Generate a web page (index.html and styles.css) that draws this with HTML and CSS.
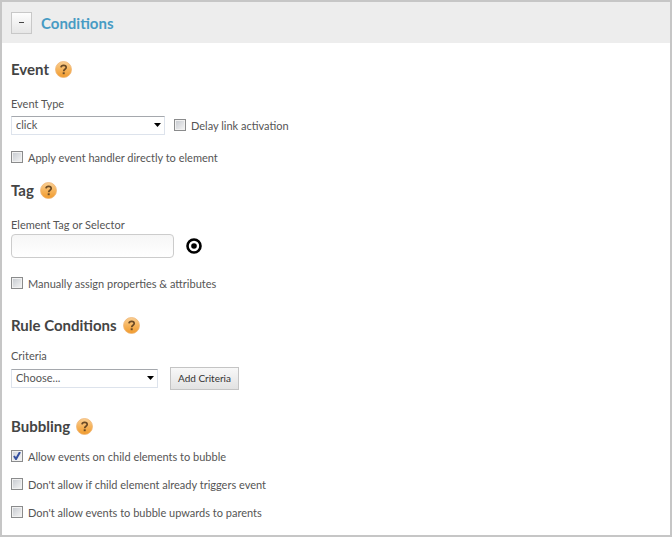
FILE: index.html
```html
<!DOCTYPE html>
<html lang="en">
<head>
<meta charset="utf-8">
<title>Conditions</title>
<link rel="stylesheet" href="styles.css">
</head>
<body>
<svg class="defs" width="0" height="0" aria-hidden="true">
  <defs>
    <linearGradient id="orange" x1="0" y1="0" x2="0" y2="1">
      <stop offset="0" stop-color="#f9cf94"/>
      <stop offset="0.5" stop-color="#f6b45c"/>
      <stop offset="1" stop-color="#f09a2c"/>
    </linearGradient>
    <symbol id="help" viewBox="0 0 17 17">
      <circle cx="8.5" cy="8.5" r="8" fill="url(#orange)" stroke="#f0b676" stroke-width="0.8"/>
      <path d="M6 6.3C6.2 4.9 7.3 4.3 8.6 4.3c1.500 0 2.600.8 2.600 2.100 0 1.900-2.500 1.900-2.500 3.900" fill="none" stroke="#6b4a25" stroke-width="1.700"/>
      <rect x="7.700" y="11.300" width="2" height="1.900" fill="#6b4a25"/>
    </symbol>
  </defs>
</svg>
<main class="panel">
  <header class="panel-header">
    <button class="toggle" type="button" aria-label="Collapse"><span class="minus"></span></button>
    <h1>Conditions</h1>
  </header>
  <form class="panel-body">
    <section class="event">
      <h2>Event <svg class="help"><use href="#help"/></svg></h2>
      <label class="caption" for="type">Event Type</label>
      <div class="row">
        <select id="type" class="wide"><option>click</option></select>
        <label class="check"><input type="checkbox"><span>Delay link activation</span></label>
      </div>
      <label class="check"><input type="checkbox"><span>Apply event handler directly to element</span></label>
    </section>
    <section class="tag">
      <h2>Tag <svg class="help"><use href="#help"/></svg></h2>
      <label class="caption" for="selector">Element Tag or Selector</label>
      <div class="row">
        <input id="selector" class="text" type="text">
        <button class="target" type="button" aria-label="Pick element">
          <svg width="16" height="16" viewBox="0 0 16 16"><circle cx="8" cy="8" r="6.500" fill="#fff" stroke="#000" stroke-width="2.600"/><circle cx="8" cy="8" r="2.800"/></svg>
        </button>
      </div>
      <label class="check"><input type="checkbox"><span>Manually assign properties &amp; attributes</span></label>
    </section>
    <section class="rules">
      <h2>Rule Conditions <svg class="help"><use href="#help"/></svg></h2>
      <label class="caption" for="criteria">Criteria</label>
      <div class="row">
        <select id="criteria"><option>Choose...</option></select>
        <button class="add" type="button">Add Criteria</button>
      </div>
    </section>
    <section class="bubbling">
      <h2>Bubbling <svg class="help"><use href="#help"/></svg></h2>
      <label class="check"><input type="checkbox" checked><span>Allow events on child elements to bubble</span></label>
      <label class="check"><input type="checkbox"><span>Don't allow if child element already triggers event</span></label>
      <label class="check"><input type="checkbox"><span>Don't allow events to bubble upwards to parents</span></label>
    </section>
  </form>
</main>
</body>
</html>
```
FILE: styles.css
```css
* { box-sizing: border-box; }

body {
  margin: 0;
  background: #fff;
  color: #555;
  font: 11px/16px Lato, "Open Sans", sans-serif;
}

.defs { position: absolute; }

.panel {
  min-height: 100vh;
  border: 2px solid #c6c6c6;
}

.panel-header {
  display: flex;
  align-items: center;
  gap: 9px;
  height: 41px;
  padding: 0 9px;
  background: #ededed;
}

h1, h2 {
  margin: 0;
  font-size: 15px;
  line-height: 20px;
  font-weight: 700;
}

h1 { color: #479bc4; }

h2 {
  display: flex;
  align-items: center;
  gap: 6px;
  color: #444;
}

.help { width: 17px; height: 17px; }

button, input, select {
  margin: 0;
  font: inherit;
  color: inherit;
}

.toggle {
  display: grid;
  place-items: center;
  width: 21px;
  height: 22px;
  padding: 0;
  border: 1px solid #c8c8c8;
  background: linear-gradient(#fdfdfd, #e6e6e6);
}

.minus { width: 5px; height: 1px; background: #444; }

.panel-body { padding: 16px 9px 10px; }

.caption { display: block; margin-top: 17px; }

.row {
  display: flex;
  align-items: center;
  height: 24px;
  margin-top: 1px;
}

.check {
  display: flex;
  align-items: center;
  gap: 5px;
  width: fit-content;
  margin-top: 11px;
}

.check span { padding-top: 2px; }

.row .check { margin: 0 0 0 9px; }

input[type="checkbox"] {
  appearance: none;
  width: 12px;
  height: 12px;
  border: 1px solid #8a8b8c;
  background: linear-gradient(135deg, #c4c8ce, #f6f6f6);
  box-shadow: inset 0 0 0 1px #f1f1f1;
}

input[type="checkbox"]:checked {
  background: url("data:image/svg+xml,%3Csvg xmlns='http://www.w3.org/2000/svg' width='10' height='10'%3E%3Cpath d='M2 5l2 3L8 1' fill='none' stroke='%23344f9f' stroke-width='2'/%3E%3C/svg%3E") center no-repeat, linear-gradient(135deg, #d0d4dc, #f6f6f6);
}

select {
  appearance: none;
  width: 147px;
  height: 19px;
  padding: 0 4px;
  border: 1px solid #dde3ec;
  border-top-color: #a5a8ad;
  border-radius: 0;
  background: #fff url("data:image/svg+xml,%3Csvg xmlns='http://www.w3.org/2000/svg' width='7' height='4'%3E%3Cpath d='M0 0h7L3.500 4z'/%3E%3C/svg%3E") no-repeat right 3px center;
}

.wide { width: 154px; }

.text {
  width: 163px;
  height: 24px;
  padding: 0 6px;
  border: 1px solid #ccc;
  border-radius: 4px;
  background: linear-gradient(#f6f6f6, #fff);
}

.target {
  display: flex;
  margin-left: 12px;
  padding: 0;
  border: 0;
  background: none;
}

.add {
  height: 23px;
  margin-left: 12px;
  padding: 0 7px;
  border: 1px solid #c4c4c4;
  background: linear-gradient(#f8f8f8, #e2e2e2);
  color: #333;
  font-size: 10px;
}

.tag { margin-top: 14px; }
.tag > .check { margin-top: 16px; }
.rules { margin-top: 23px; }
.rules .caption { margin-top: 13px; }
.rules .row { margin-top: 2px; }
.bubbling { margin-top: 26px; }
.bubbling .check + .check { margin-top: 10px; }
```
